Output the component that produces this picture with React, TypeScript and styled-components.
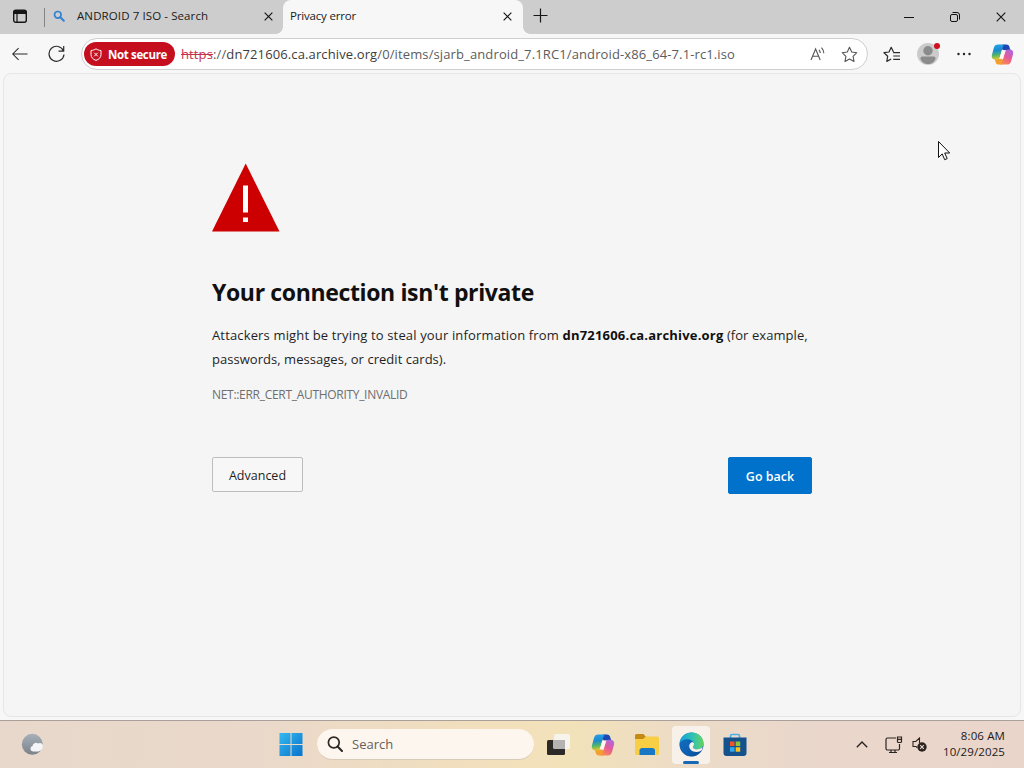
import React from "react";
import styled, { createGlobalStyle } from "styled-components";

const GlobalStyle = createGlobalStyle`
  * { box-sizing: border-box; }
  body { margin: 0; overflow: hidden; background: #f7f7f7; }
  button { font: inherit; margin: 0; padding: 0; border: 0; background: none; color: inherit; }
  svg { display: block; flex: none; }
`;

const Screen = styled.div`
  position: relative;
  width: 1024px;
  height: 768px;
  display: flex;
  flex-direction: column;
  font-family: "Open Sans", "Noto Sans", sans-serif;
  color: #1a1a1a;
  overflow: hidden;
`;

const Label = styled.span<{ $size: number; $spacing?: number; $weight?: number; $color?: string }>`
  font-size: ${(p) => p.$size}px;
  letter-spacing: ${(p) => p.$spacing ?? 0}px;
  font-weight: ${(p) => p.$weight ?? 400};
  color: ${(p) => p.$color ?? "inherit"};
  white-space: nowrap;
`;

/* Tab strip */
const TabStrip = styled.header`
  height: 34px;
  flex: none;
  display: flex;
  background: #cdcdcd;
`;
const TabActions = styled.div`
  width: 45px;
  display: flex;
  align-items: center;
  justify-content: space-between;
  padding: 0 0 2px 12px;
`;
const Divider = styled.span`
  width: 1px;
  height: 19px;
  margin-top: 2px;
  background: #848484;
`;
const Tab = styled.div<{ $active?: boolean }>`
  position: relative;
  width: ${(p) => (p.$active ? 240 : 238)}px;
  display: flex;
  align-items: center;
  padding: ${(p) => (p.$active ? "0 11px 3px 7px" : "0 10px 3px 8px")};
  background: ${(p) => (p.$active ? "#f7f7f7" : "transparent")};
  border-radius: 8px 8px 0 0;
  & > button { margin-left: auto; padding-top: 1px; }
  &::before, &::after {
    content: "";
    display: ${(p) => (p.$active ? "block" : "none")};
    position: absolute;
    bottom: 0;
    width: 7px;
    height: 7px;
  }
  &::before { left: -7px; background: radial-gradient(circle at 0 0, transparent 6.5px, #f7f7f7 7px); }
  &::after { right: -7px; background: radial-gradient(circle at 100% 0, transparent 6.5px, #f7f7f7 7px); }
`;
const TabIcon = styled.span`
  width: 24px;
`;
const NewTab = styled.button`
  width: 35px;
  display: grid;
  place-items: center;
  padding-bottom: 3px;
`;
const WindowControls = styled.div`
  margin-left: auto;
  width: 138px;
  display: grid;
  grid-template-columns: repeat(3, 46px);
  & > button { display: grid; place-items: center; }
`;

/* Toolbar */
const Toolbar = styled.nav`
  height: 39px;
  flex: none;
  display: flex;
  align-items: center;
  background: #f7f7f7;
  padding: 1px 8px 0 11px;
`;
const ToolButton = styled.button<{ $width: number }>`
  width: ${(p) => p.$width}px;
  flex: none;
  height: 32px;
  display: grid;
  place-items: center;
  position: relative;
`;
const AddressBar = styled.div`
  width: 787px;
  height: 32px;
  margin-left: -2px;
  flex: none;
  display: flex;
  align-items: center;
  border: 1px solid #cfcfcf;
  border-radius: 16px;
  background: #fff;
  padding: 0 3px 0 2px;
`;
const SecurityPill = styled.div`
  width: 91px;
  height: 24px;
  display: flex;
  align-items: center;
  gap: 6px;
  padding-left: 6px;
  border-radius: 12px;
  background: #c50f1f;
  color: #fff;
`;
const Url = styled.div`
  flex: 1;
  margin-left: 6px;
  font-size: 13px;
  letter-spacing: 0.12px;
  line-height: 20px;
  color: #5c5c5c;
  white-space: nowrap;
`;
const Scheme = styled.s`
  color: #c4314b;
`;
const Host = styled.span`
  color: #3c3c3c;
`;
const AlertDot = styled.span`
  position: absolute;
  top: 5px;
  right: 0;
  width: 6px;
  height: 6px;
  border-radius: 50%;
  background: #d0101c;
`;

/* Page */
const PageFrame = styled.main`
  flex: 1;
  margin: 0 3px 3px;
  padding: 89px 0 0 208px;
  background: #f5f5f5;
  border: 1px solid #e6e6e8;
  border-radius: 8px;
`;
const Notice = styled.article`
  width: 600px;
`;
const Heading = styled.h1`
  margin: 42px 0 0;
  font-size: 23px;
  line-height: 36px;
  font-weight: 700;
  letter-spacing: -0.36px;
  color: #101010;
  white-space: nowrap;
`;
const Message = styled.p`
  margin: 13px 0 0;
  font-size: 13px;
  line-height: 24px;
  color: #1f1f1f;
  white-space: nowrap;
  b { font-weight: 700; color: #101010; letter-spacing: 0.2px; }
`;
const Phrase = styled.span<{ $spacing: number }>`
  letter-spacing: ${(p) => p.$spacing}px;
`;
const ErrorCode = styled.p`
  margin: 14px 0 0;
  font-size: 12px;
  letter-spacing: -0.3px;
  line-height: 20px;
  color: #6e6e6e;
`;
const Actions = styled.div`
  margin-top: 52px;
  display: flex;
  justify-content: space-between;
  align-items: flex-start;
`;
const ActionButton = styled.button<{ $primary?: boolean }>`
  width: ${(p) => (p.$primary ? 84 : 91)}px;
  height: ${(p) => (p.$primary ? 37 : 35)}px;
  padding-bottom: 1px;
  border: 1px solid ${(p) => (p.$primary ? "#0072cc" : "#bdbdbd")};
  border-radius: 2px;
  background: ${(p) => (p.$primary ? "#0072cc" : "#f7f7f7")};
  color: ${(p) => (p.$primary ? "#fff" : "#1f1f1f")};
`;

/* Taskbar */
const Taskbar = styled.footer`
  height: 48px;
  flex: none;
  display: flex;
  align-items: center;
  border-top: 1px solid #a9a09b;
  background: linear-gradient(90deg, #e8d8cb 0, #ead9ca 260px, #f2dfbd 480px, #f2e2b9 570px, #ecdbc8 700px, #ead7cc 800px, #ead5ca 100%);
`;
const Weather = styled.div`
  width: 272px;
  padding: 0 0 2px 20px;
`;
const TaskButton = styled.button<{ $active?: boolean }>`
  width: 38px;
  height: 38px;
  margin-right: 6px;
  position: relative;
  display: grid;
  place-items: center;
  border-radius: 4px;
  background: ${(p) => (p.$active ? "#f8f1ea" : "transparent")};
  &::after {
    content: "";
    display: ${(p) => (p.$active ? "block" : "none")};
    position: absolute;
    left: 11px;
    bottom: 0;
    width: 16px;
    height: 3px;
    border-radius: 2px;
    background: #1769b5;
  }
`;
const SearchBox = styled.div`
  width: 217px;
  height: 31px;
  margin: 0 6px 0 1px;
  padding-left: 10px;
  display: flex;
  align-items: center;
  gap: 9px;
  border-radius: 16px;
  background: #fcf6ee;
  border-bottom: 1px solid #dacab8;
`;
const Tray = styled.div`
  margin-left: auto;
  padding-right: 19px;
  display: flex;
  align-items: center;
`;
const TrayIcons = styled.div`
  display: flex;
  align-items: center;
  gap: 9px;
  margin-right: 16px;
  & > svg:first-child { margin-right: 8px; }
`;
const Clock = styled.div`
  display: flex;
  flex-direction: column;
  align-items: flex-end;
  line-height: 16px;
  padding-bottom: 2px;
`;
const Pointer = styled.div`
  position: absolute;
  left: 937px;
  top: 140px;
`;

const Cross = ({ size = 9, weight = 1.2 }: { size?: number; weight?: number }) => (
  <svg width={size} height={size} viewBox="0 0 10 10" stroke="#111" strokeWidth={weight} fill="none">
    <path d="M.7.7 9.3 9.3M9.3.7.7 9.3" />
  </svg>
);

const CopilotLogo = ({ id, size }: { id: string; size: number }) => (
  <svg width={size} height={size} viewBox="0 0 24 24">
    <defs>
      <linearGradient id={`${id}a`} x1=".3" y1="0" x2="0.4" y2="1">
        <stop offset="0" stopColor="#25a0e8" />
        <stop offset=".4" stopColor="#1b8bd0" />
        <stop offset=".7" stopColor="#52b66a" />
        <stop offset="1" stopColor="#e8c62a" />
      </linearGradient>
      <linearGradient id={`${id}b`} x1=".8" y1="0" x2=".3" y2="1">
        <stop offset="0" stopColor="#a968e4" />
        <stop offset=".5" stopColor="#e45a9b" />
        <stop offset="1" stopColor="#fb8a4e" />
      </linearGradient>
    </defs>
    <path d="M12 1.500h4c1.800 0 2.700.9 3.200 2.500l.7 2.400c.2.800.7 1.100 1.300 1.100h-7.700L10.500 6z" fill="#1c47b4" />
    <path d="M12 22.500H8c-1.800 0-2.700-.9-3.200-2.500l-.7-2.400c-.2-.8-.7-1.100-1.300-1.100h7.700l3 1.500z" fill="#f4a02f" />
    <path d="M7.500 1.500H15c-1.500.2-2.100 1-2.600 2.700L9.300 14.500C8.700 16.500 7.800 17.300 6 17.300H4.500C1.500 17.300.3 15 1 12.200L3 5c.7-2.400 2-3.500 4.500-3.500z" fill={`url(#${id}a)`} />
    <path d="M16.500 22.500H9c1.500-.2 2.100-1 2.600-2.700L14.700 9.500c.6-2 1.500-2.800 3.300-2.800h1.500c3 0 4.200 2.300 3.500 5.100L21 19c-.7 2.400-2 3.500-4.500 3.500z" fill={`url(#${id}b)`} />
    <path d="M11.300 7.800h4.200c-.5.500-.7 1-.9 1.700l-2 6.700H8.500c.5-.5.700-1 .9-1.700z" fill="#fff6ef" />
  </svg>
);

const EdgeLogo = () => (
  <svg width="25" height="25" viewBox="0 0 25 25">
    <defs>
      <linearGradient id="edgeTop" x1="0" y1=".5" x2="1" y2=".5">
        <stop offset="0" stopColor="#159ed9" />
        <stop offset=".55" stopColor="#30c3b3" />
        <stop offset="1" stopColor="#67d35e" />
      </linearGradient>
      <linearGradient id="edgeBase" x1="0" y1="0" x2=".7" y2="1">
        <stop offset="0" stopColor="#1787d4" />
        <stop offset="1" stopColor="#0b4e9c" />
      </linearGradient>
    </defs>
    <circle cx="12.500" cy="12.500" r="12" fill="url(#edgeBase)" />
    <path d="M.6 11.500C1.200 5.200 6 .5 12.500.5c7 0 12 5 12 10.500 0 4-2.900 6.200-6.200 6.200-2.600 0-4.200-.9-4.200-1.800 0-.7.9-1.200.9-2.900 0-2.800-2.700-5.200-6.500-5.200-4 0-6.800 2-7.900 4.200z" fill="url(#edgeTop)" />
    <path d="M14.900 11.100c.6 1.900-.8 3.200-.8 4.300 0 1.100 1.700 1.800 4.200 1.800 2.200 0 4-.8 5.300-2.400L22.900 18c-1.200 1.200-3.200 2-5.400 2-4.500 0-7.300-2.700-7.300-5.900 0-2.200 1.400-3.900 3.100-4.200z" fill="#f8f1ea" />
    <path d="M8.500 7.400c-4 0-6.800 2-7.900 4.200C.5 18 5 24.500 12.500 24.500c1.500 0 2.600-.2 3.500-.5-5-.5-8-4.200-8-8.400 0-3.200 2-5.200 5-5.500C12 8.400 10.500 7.500 8.500 7.400z" fill="#1160b2" opacity=".55" />
  </svg>
);

export default function App() {
  return (
    <Screen>
      <GlobalStyle />
      <TabStrip>
        <TabActions>
          <svg width="16" height="16" viewBox="0 0 16 16" fill="none" stroke="#161616">
            <rect x="1.700" y="2.300" width="12.600" height="12" rx="2" strokeWidth="1.400" />
            <path d="M2 3h12v2.500H2z" fill="#161616" />
            <path d="M5 5v9" strokeWidth="1.200" />
          </svg>
          <Divider />
        </TabActions>
        <Tab>
          <TabIcon>
            <svg width="12" height="12" viewBox="0 0 12 12" fill="none" stroke="#3282d2">
              <circle cx="4.800" cy="4.800" r="3.300" strokeWidth="1.700" />
              <path d="M7.300 7.300 10.800 10.800" strokeWidth="2" strokeLinecap="round" />
            </svg>
          </TabIcon>
          <Label $size={11.5} $spacing={0.1}>ANDROID 7 ISO - Search</Label>
          <button aria-label="Close tab"><Cross /></button>
        </Tab>
        <Tab $active>
          <Label $size={11.5} $spacing={-0.18}>Privacy error</Label>
          <button aria-label="Close tab"><Cross /></button>
        </Tab>
        <NewTab aria-label="New tab">
          <svg width="15" height="15" viewBox="0 0 15 15" stroke="#161616" strokeWidth="1.200">
            <path d="M7.500.5v14M.5 7.500h14" />
          </svg>
        </NewTab>
        <WindowControls>
          <button aria-label="Minimize">
            <svg width="10" height="10" viewBox="0 0 10 10" stroke="#111"><path d="M0 5.500h10" /></svg>
          </button>
          <button aria-label="Restore">
            <svg width="10" height="10" viewBox="0 0 10 10" fill="none" stroke="#111">
              <rect x=".5" y="2.500" width="7" height="7" rx="1.500" />
              <path d="M2.500.5H7A2.500 2.500 0 0 1 9.500 3v4.500" />
            </svg>
          </button>
          <button aria-label="Close"><Cross size={10} weight={1.1} /></button>
        </WindowControls>
      </TabStrip>

      <Toolbar>
        <ToolButton $width={18} aria-label="Back">
          <svg width="16" height="14" viewBox="0 0 17 14" fill="none" stroke="#2b2b2b" strokeWidth="1.100">
            <path d="M16.500 7H1M7 .7.800 7 7 13.300" />
          </svg>
        </ToolButton>
        <ToolButton $width={54} aria-label="Refresh">
          <svg width="17" height="18" viewBox="0 0 17 18" fill="none" stroke="#2b2b2b" strokeWidth="1.200">
            <path d="M15.500 6A7.500 7.500 0 1 0 16 9.500M15.700 1v5.200h-5.200" />
          </svg>
        </ToolButton>
        <AddressBar>
          <SecurityPill>
            <svg width="12" height="13" viewBox="0 0 12 13" fill="none" stroke="#fff">
              <path d="M6 .8c1.500 1.100 3 1.600 5 1.700v4c0 3-2 4.900-5 5.900-3-1-5-2.900-5-5.900v-4C3 2.400 4.500 1.900 6 .8z" />
              <path d="M4.200 4.700l3.600 3.600M7.800 4.700 4.200 8.300" />
            </svg>
            <Label $size={11.5} $weight={700} $spacing={-0.35}>Not secure</Label>
          </SecurityPill>
          <Url>
            <Scheme>https</Scheme>://<Host>dn721606.ca.archive.org</Host>/0/items/sjarb_android_7.1RC1/android-x86_64-7.1-rc1.iso
          </Url>
          <ToolButton $width={32} aria-label="Read aloud">
            <svg width="16" height="14" viewBox="0 0 16 14" fill="none" stroke="#555" strokeWidth="1.100">
              <path d="M1 13 5.600 2 10.200 13M2.700 9.300h5.800M9 2.800c.9 1 1.300 2 1.300 3.300M11.500.7c1.500 1.700 2.300 3.400 2.300 5.600" />
            </svg>
          </ToolButton>
          <ToolButton $width={30} aria-label="Add to favorites">
            <svg width="17" height="17" viewBox="0 0 17 17" fill="none" stroke="#555" strokeWidth="1.100" strokeLinejoin="round">
              <path d="M8.500 1.300l2.200 4.700 5.100.7-3.700 3.600.9 5.100-4.500-2.500L4 15.400l.9-5.100L1.200 6.700 6.300 6z" />
            </svg>
          </ToolButton>
        </AddressBar>
        <ToolButton $width={48} aria-label="Favorites">
          <svg width="18" height="17" viewBox="0 0 18 17" fill="none" stroke="#2b2b2b" strokeWidth="1.200" strokeLinejoin="round">
            <path d="M10.500 6 8.200 1.300 6 6l-5 .7 3.700 3.500-.9 5.200L8.200 13M10.200 6.600H17M10.200 10H17M10.200 13.300H17" />
          </svg>
        </ToolButton>
        <ToolButton $width={24} aria-label="Profile">
          <svg width="22" height="22" viewBox="0 0 22 22">
            <circle cx="11" cy="11" r="11" fill="#cbcbcb" />
            <circle cx="11" cy="7.800" r="4.700" fill="#8b8b8b" />
            <path d="M3.500 15.500c0-1.400 1-2 2.500-2h10c1.500 0 2.500.6 2.500 2C17.800 19 14.500 21 11 21s-6.800-2-7.500-5.500z" fill="#8b8b8b" />
          </svg>
          <AlertDot />
        </ToolButton>
        <ToolButton $width={48} aria-label="Settings and more">
          <svg width="14" height="4" viewBox="0 0 14 4" fill="#222">
            <circle cx="1.500" cy="2" r="1.200" /><circle cx="7" cy="2" r="1.200" /><circle cx="12.500" cy="2" r="1.200" />
          </svg>
        </ToolButton>
        <ToolButton $width={28} aria-label="Copilot">
          <CopilotLogo id="bar" size={23} />
        </ToolButton>
      </Toolbar>

      <PageFrame>
        <Notice>
          <svg width="68" height="69" viewBox="0 0 68 69">
            <path d="M33.700.5 67.500 68.500H0z" fill="#cc0000" />
            <path d="M31 22.500h5v27h-5zM31 54.500h5v4.500h-5z" fill="#fff" />
          </svg>
          <Heading>Your connection isn't private</Heading>
          <Message>
            <Phrase $spacing={0.15}>Attackers might be trying to steal your information from </Phrase>
            <b>dn721606.ca.archive.org</b>
            <Phrase $spacing={0.06}> (for example,</Phrase>
            <br />
            <Phrase $spacing={0.04}>passwords, messages, or credit cards).</Phrase>
          </Message>
          <ErrorCode>NET::ERR_CERT_AUTHORITY_INVALID</ErrorCode>
          <Actions>
            <ActionButton><Label $size={12.5}>Advanced</Label></ActionButton>
            <ActionButton $primary><Label $size={12.5} $weight={600}>Go back</Label></ActionButton>
          </Actions>
        </Notice>
      </PageFrame>

      <Taskbar>
        <Weather>
          <svg width="24" height="24" viewBox="0 0 24 24">
            <defs>
              <linearGradient id="moon" x1="0" y1="0" x2="0" y2="1">
                <stop offset="0" stopColor="#a6b0b9" />
                <stop offset="1" stopColor="#7b8289" />
              </linearGradient>
            </defs>
            <circle cx="12.300" cy="12.300" r="10.500" fill="url(#moon)" />
            <path d="M13 19.500a2.800 2.800 0 0 1-.5-5.500 3.500 3.500 0 0 1 5.500-2.500c1.800-1.300 4.800-.5 5 2 .1 3.300-2.500 6-5.500 6z" fill="#f5f5f7" />
          </svg>
        </Weather>
        <TaskButton aria-label="Start">
          <svg width="24" height="24" viewBox="0 0 24 24">
            <defs>
              <linearGradient id="win" x1="0" y1="0" x2="1" y2="1">
                <stop offset="0" stopColor="#35b9ef" />
                <stop offset="1" stopColor="#0873cc" />
              </linearGradient>
            </defs>
            <path d="M.5 0h11v11H.5zM12.500 0h11v11h-11zM.5 12h11v11H.5zM12.500 12h11v11h-11z" fill="url(#win)" />
          </svg>
        </TaskButton>
        <SearchBox>
          <svg width="16" height="16" viewBox="0 0 16 16" fill="none" stroke="#2d2926">
            <circle cx="6.800" cy="6.500" r="5.400" strokeWidth="1.700" />
            <path d="M10.600 10.500 15 15" strokeWidth="2" strokeLinecap="round" />
          </svg>
          <Label $size={13} $color="#66605a">Search</Label>
        </SearchBox>
        <TaskButton aria-label="Task view">
          <svg width="24" height="24" viewBox="0 0 24 24">
            <rect x="7" y="1" width="16" height="15" rx="1.500" fill="#f7f4ee" />
            <rect x="0" y="7" width="18" height="15" rx="1.500" fill="#2c2926" />
            <path d="M6 7h12v9H7.500A1.500 1.500 0 0 1 6 14.500z" fill="#b5b3b1" />
          </svg>
        </TaskButton>
        <TaskButton aria-label="Copilot"><CopilotLogo id="task" size={24} /></TaskButton>
        <TaskButton aria-label="File Explorer">
          <svg width="24" height="24" viewBox="0 0 24 24">
            <path d="M0 2.500A1.500 1.500 0 0 1 1.500 1h7l2.500 3v5H0z" fill="#c48a13" />
            <path d="M0 6h8l3-2.500h11.500A1.500 1.500 0 0 1 24 5v15.500a1.500 1.500 0 0 1-1.500 1.500h-21A1.500 1.500 0 0 1 0 20.500z" fill="#f8ce45" />
            <path d="M4.500 22v-4.500c0-1.500 1-2.500 2.500-2.500h10.500c1.500 0 2.500 1 2.500 2.500V22z" fill="#1878c5" />
          </svg>
        </TaskButton>
        <TaskButton $active aria-label="Microsoft Edge"><EdgeLogo /></TaskButton>
        <TaskButton aria-label="Microsoft Store">
          <svg width="24" height="24" viewBox="0 0 24 24">
            <path d="M7.500 6V3A1.500 1.500 0 0 1 9 1.500h6A1.500 1.500 0 0 1 16.500 3v3" fill="none" stroke="#4db0e6" strokeWidth="1.700" />
            <path d="M.5 4.500h23V20a3 3 0 0 1-3 3h-17a3 3 0 0 1-3-3z" fill="#15528d" />
            <path d="M7 8.500h4.500V13H7z" fill="#f35325" /><path d="M12.700 8.500h4.500V13h-4.500z" fill="#8cc63f" />
            <path d="M7 14.200h4.500v4.500H7z" fill="#31a8ee" /><path d="M12.700 14.200h4.500v4.500h-4.500z" fill="#ffc21a" />
          </svg>
        </TaskButton>
        <Tray>
          <TrayIcons>
            <svg width="12" height="7" viewBox="0 0 12 7" fill="none" stroke="#2b2522" strokeWidth="1.400"><path d="M.8 6.200 6 1l5.200 5.200" /></svg>
            <svg width="18" height="18" viewBox="0 0 18 18" fill="none" stroke="#2b2522" strokeWidth="1.200">
              <path d="M11 2H2.500A1.500 1.500 0 0 0 1 3.500v9A1.500 1.500 0 0 0 2.500 14H13a1.500 1.500 0 0 0 1.500-1.500V8M6 14v2.500M10 14v2.500M4 16.500h8M12.500 1h4v4.500a1 1 0 0 1-1 1h-2a1 1 0 0 1-1-1zM12.500 3.300h4" />
            </svg>
            <svg width="15" height="15" viewBox="0 0 15 15" fill="none" stroke="#2b2522">
              <path d="M7.500 6V1L3.800 4.500H1v5h3l1.200 1.200" strokeWidth="1.100" />
              <circle cx="10" cy="10" r="4.700" fill="#2b2522" stroke="none" />
              <path d="M8.200 8.200l3.600 3.600M11.800 8.200l-3.600 3.600" stroke="#ead6cb" strokeWidth="1.100" />
            </svg>
          </TrayIcons>
          <Clock>
            <Label $size={11.5} $spacing={0.12}>8:06 AM</Label>
            <Label $size={11.5} $spacing={0.1}>10/29/2025</Label>
          </Clock>
        </Tray>
      </Taskbar>

      <Pointer>
        <svg width="14" height="22" viewBox="0 0 14 22">
          <path d="M1.500 1.500v16l3.700-3.600 2.500 5.800 2.500-1.100-2.500-5.600h5z" fill="#fff" stroke="#111" />
        </svg>
      </Pointer>
    </Screen>
  );
}
